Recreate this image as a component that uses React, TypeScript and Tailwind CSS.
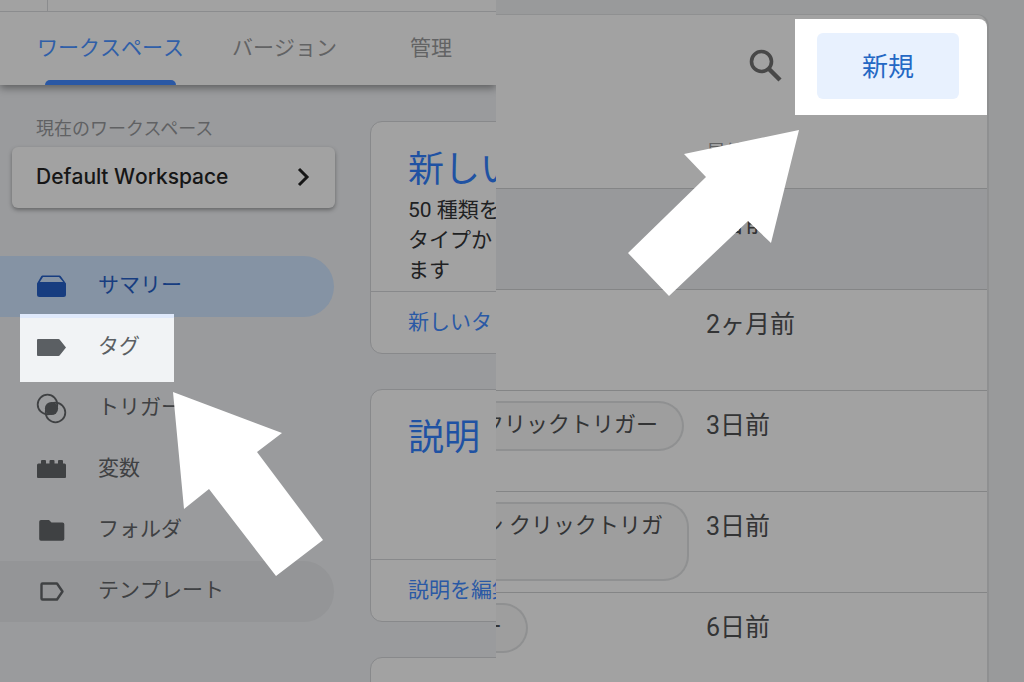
import React from 'react'

interface NavItem {
  label: string
  icon: React.ReactNode
  state?: 'active' | 'spotlight' | 'hover'
}

const navItems: NavItem[] = [
  {
    label: 'サマリー',
    state: 'active',
    icon: (
      <svg className="h-8 w-8" viewBox="0 0 32 32" fill="currentColor">
        <path d="M7.500 5.500h17q.8 0 1.300.8L31 13.500v11a2.500 2.500 0 0 1-2.500 2.500h-24A2.500 2.500 0 0 1 2 24.500v-11l4.200-7.200q.5-.8 1.300-.8zM8 7 4.800 12h23.400L24 7z" fillRule="evenodd" />
      </svg>
    ),
  },
  {
    label: 'タグ',
    state: 'spotlight',
    icon: (
      <svg className="h-8 w-8" viewBox="0 0 32 32" fill="currentColor">
        <path d="M3 8h20.500q.8 0 1.300.7L31 16.500l-6.200 7.800q-.5.700-1.300.7H3q-1 0-1-1V9q0-1 1-1z" />
      </svg>
    ),
  },
  {
    label: 'トリガー',
    icon: (
      <svg className="h-8 w-8" viewBox="0 0 32 32">
        <g fill="none" stroke="currentColor" strokeWidth="1.800">
          <circle cx="12.500" cy="12.500" r="9.800" />
          <circle cx="20.500" cy="20.500" r="9.800" />
        </g>
        <circle cx="16.500" cy="16.500" r="6.600" fill="currentColor" />
      </svg>
    ),
  },
  {
    label: '変数',
    icon: (
      <svg className="h-8 w-8" viewBox="0 0 32 32" fill="currentColor">
        <path d="M2 12q0-1.500 1.500-1.500H6V8q0-1 1-1h3q1 0 1 1v2.500h3.500V8q0-1 1-1h3q1 0 1 1v2.500H23V8q0-1 1-1h3q1 0 1 1v2.500h1.500q1.500 0 1.500 1.500v12q0 1-1 1H3q-1 0-1-1z" />
      </svg>
    ),
  },
  {
    label: 'フォルダ',
    icon: (
      <svg className="h-8 w-8" viewBox="0 0 32 32" fill="currentColor">
        <path d="M6 6h8l2.500 2.500H27.500a1.800 1.800 0 0 1 1.800 1.800V25a1.800 1.800 0 0 1-1.800 1.800H6A1.800 1.800 0 0 1 4.200 25V7.800A1.800 1.800 0 0 1 6 6z" />
      </svg>
    ),
  },
  {
    label: 'テンプレート',
    state: 'hover',
    icon: (
      <svg className="h-8 w-8" viewBox="0 0 32 32" fill="none" stroke="currentColor" strokeWidth="2.400" strokeLinejoin="round">
        <path d="M7.500 8.500h14.500l5.500 8-5.500 8H7.500q-1 0-1-1v-14q0-1 1-1z" />
      </svg>
    ),
  },
]

const itemStyles = {
  active: 'rounded-r-full bg-[#8593a4] text-[#173d80]',
  spotlight: 'text-[#5b5f63]',
  hover: 'rounded-r-full bg-[#949597] text-[#3f4143]',
  plain: 'text-[#3f4143]',
}

const rows = [
  { chip: '', chipStyle: '', date: '3日前', rowStyle: 'bg-[#98999b]' },
  { chip: '', chipStyle: '', date: '2ヶ月前', rowStyle: '' },
  { chip: 'クリックトリガー', chipStyle: 'h-[50px] w-[188px] pr-6', date: '3日前', rowStyle: '' },
  { chip: 'ン クリックトリガ', chipStyle: 'h-[79px] w-[193px] pr-6', date: '3日前', rowStyle: '' },
  { chip: 'ー', chipStyle: 'h-[50px] w-8 pr-6', date: '6日前', rowStyle: '' },
]

const Tabs: React.FC = () => (
  <header className="relative shadow-[0_3px_8px_rgba(0,0,0,0.4)]">
    <div className="flex h-3 border-b border-[#8b8c8e] bg-[#a2a2a2]">
      <div className="w-12 border-r border-[#8b8c8e]" />
    </div>
    <nav className="flex h-[73px] bg-[#a2a2a2] pl-[13px] text-[21px] whitespace-nowrap text-[#626364]">
      <a href="#workspace" className="relative flex shrink-0 items-center px-6 text-[#305fa8]">
        ワークスペース
        <span className="absolute inset-x-8 bottom-0 h-[5px] rounded-t-full bg-[#2a58a5]" />
      </a>
      <a href="#versions" className="flex shrink-0 items-center px-6">バージョン</a>
      <a href="#admin" className="flex w-[140px] shrink-0 items-center justify-center">管理</a>
    </nav>
  </header>
)

const Sidebar: React.FC = () => (
  <aside className="w-[334px] shrink-0 pt-[31px]">
    <p className="pl-9 text-[18px] leading-[26px] text-[#606163] [font-kerning:normal]">現在のワークスペース</p>
    <button className="mt-[5px] ml-3 flex h-[61px] w-[323px] items-center justify-between rounded-md bg-[#a2a2a2] pr-5 pb-0.5 pl-6 font-['Inter'] text-[21px] font-medium text-[#161616] shadow-[0_2px_4px_rgba(0,0,0,0.35)]">
      Default Workspace
      <svg className="h-6 w-6" viewBox="0 0 24 24" fill="none" stroke="currentColor" strokeWidth="3">
        <path d="m8 4 8 8-8 8" />
      </svg>
    </button>
    <ul className="mt-12">
      {navItems.map((item) => (
        <li key={item.label} className="relative">
          {item.state === 'spotlight' && (
            <span className="absolute -top-[3px] left-5 h-[68px] w-[154px] border-t-4 border-[#dfe9fb] bg-[#f1f3f5]" />
          )}
          <a href="#nav" className={`relative flex h-[61px] items-center gap-[31px] pb-0.5 pl-[35px] text-[21px] ${itemStyles[item.state ?? 'plain']}`}>
            {item.icon}
            <span>{item.label}</span>
          </a>
        </li>
      ))}
    </ul>
  </aside>
)

interface CardProps {
  title: string
  lines: string[]
  action: string
}

const Card: React.FC<CardProps> = ({ title, lines, action }) => (
  <section className="w-[320px] rounded-xl border border-[#88898b] bg-[#a2a2a2] whitespace-nowrap">
    <div className="h-[169px] px-[37px] pt-[23px]">
      <h2 className="text-[36px] leading-[50px] text-[#1f52a3]">{title}</h2>
      {lines.map((line) => (
        <p key={line} className="text-[21px] leading-[30px] text-[#202122]">{line}</p>
      ))}
    </div>
    <div className="border-t border-[#88898b] px-[37px]">
      <a href="#action" className="flex h-[61px] items-center text-[21px] text-[#2a59a5]">{action}</a>
    </div>
  </section>
)

const TagList: React.FC = () => (
  <main className="h-screen overflow-hidden bg-[#999a9b] pt-[14px] pr-[35px]">
    <div className="h-full rounded-tr-xl border-t border-r-2 border-[#8f9091] bg-[#a2a2a2]">
      <div className="flex items-start justify-end pt-1">
        <button aria-label="検索" className="mt-7 mr-3 text-[#484848]">
          <svg className="h-9 w-9" viewBox="0 0 36 36" fill="none" stroke="currentColor" strokeWidth="3.600">
            <circle cx="14.500" cy="14.500" r="10" />
            <path d="m21.500 21.500 11.500 11.500" strokeWidth="4.400" />
          </svg>
        </button>
        <div className="rounded-tr-lg bg-white pt-[14px] pr-7 pb-4 pl-[22px]">
          <button className="h-[66px] w-[142px] rounded-md bg-[#e8f1fe] pt-0.5 text-[26px] text-[#2468c4]">新規</button>
        </div>
      </div>
      <table className="w-full table-fixed border-collapse text-left">
        <thead>
          <tr className="h-[73px] border-b border-[#848586] text-[20px] text-[#606162]">
            <th className="w-[210px]" />
            <th className="pt-1 font-normal">最終編集</th>
          </tr>
        </thead>
        <tbody>
          {rows.map((row, i) => (
            <tr key={i} className={`h-[101px] border-b border-[#848586] ${row.rowStyle}`}>
              <td className="pt-[10px] align-top">
                {row.chip && (
                  <div className={`flex justify-end overflow-hidden rounded-r-[25px] border-2 border-l-0 border-[#8f9091] bg-[#9e9e9e] pt-[6px] text-[22px] leading-8 whitespace-nowrap text-[#333435] ${row.chipStyle}`}>
                    {row.chip}
                  </div>
                )}
              </td>
              <td className="pt-[17px] align-top text-[25px] leading-9 text-[#333435]">{row.date}</td>
            </tr>
          ))}
        </tbody>
      </table>
    </div>
  </main>
)

const App: React.FC = () => (
  <div className="relative grid h-screen grid-cols-[31fr_33fr] overflow-hidden bg-[#9a9b9d] font-['Roboto','Noto_Sans_CJK_JP',sans-serif] [font-kerning:none]">
    <div className="h-screen min-w-0 overflow-hidden">
      <Tabs />
      <div className="flex">
        <Sidebar />
        <div className="ml-9 flex shrink-0 flex-col gap-[35px] pt-9">
          <Card title="新しい" lines={['50 種類を', 'タイプか', 'ます']} action="新しいタ" />
          <Card title="説明" lines={[]} action="説明を編集" />
          <Card title="" lines={[]} action="" />
        </div>
      </div>
    </div>
    <TagList />
    <svg className="pointer-events-none absolute top-0 left-0 h-[682px] w-[1024px]" viewBox="0 0 1024 682" fill="#fff">
      <path d="M173 392 282 433 257 452 323 540 276 576 209 489 184 509z" />
      <path d="M799 130 684 154 706 177 628 253 669 296 748 221 771 243z" />
    </svg>
  </div>
)

export default App
